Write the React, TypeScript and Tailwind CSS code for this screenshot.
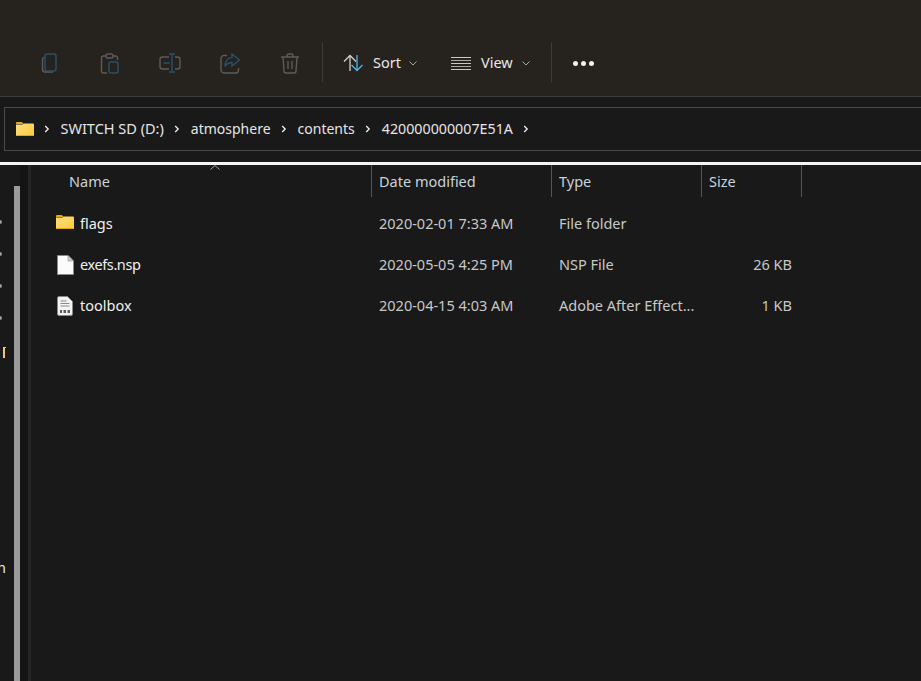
const FONT = "font-['Noto_Sans','Open_Sans',sans-serif]";

const Folder = ({ className }: { className: string }) => (
  <svg viewBox="0 0 18 14" className={className}>
    <path d="M0 1.2C0 .5.5 0 1.2 0h4.6l2 2H0z" fill="#e8a80c" />
    <path d="M0 2.6h6.4l1.6-1h8.8c.7 0 1.2.5 1.2 1.2V13c0 .6-.5 1-1 1H1c-.6 0-1-.4-1-1z" fill="url(#fold)" />
    <path d="M0 13h18v.2c0 .5-.4.8-1 .8H1c-.6 0-1-.3-1-.8z" fill="#e2a80f" />
    <defs>
      <linearGradient id="fold" x1="0" y1="0" x2="1" y2="1">
        <stop offset="0" stopColor="#ffdf7e" />
        <stop offset="1" stopColor="#fcc83e" />
      </linearGradient>
    </defs>
  </svg>
);

const DocIcon = () => (
  <svg viewBox="0 0 17 20" className="w-[17px] h-[20px]">
    <path d="M.5.5h10.500l5.500 5.500v13.500H.5z" fill="#fbfbfb" stroke="#8a8a8a" />
    <path d="M11 .5V6h5.500z" fill="#cfcfcf" stroke="#8a8a8a" strokeWidth=".6" />
  </svg>
);

const ConfigIcon = () => (
  <svg viewBox="0 0 16 20" className="w-[16px] h-[20px]">
    <path d="M2 .5h8.500l5 5V18a1.500 1.500 0 0 1-1.500 1.500H2A1.500 1.500 0 0 1 .5 18V2A1.500 1.500 0 0 1 2 .5z" fill="#f3f3f3" stroke="#8a8a8a" />
    <path d="M3.500 5h6M3.500 7.500h9M3.500 10h9" stroke="#8a8a8a" strokeWidth="1" />
    <path d="M3 14h2v3H3zM6.500 14h2.500v3H6.500zM10.500 14h2.500v3h-2.500z" fill="#5a5a5a" />
  </svg>
);

const ToolIcon = ({ children }: { children: React.ReactNode }) => (
  <svg viewBox="0 0 24 24" fill="none" strokeWidth="1.4" className="w-6 h-6 mx-[18px]">
    {children}
  </svg>
);

const GREY = "#5e5b58";
const BLUE = "#27516c";

const Chevron = () => (
  <svg viewBox="0 0 8 8" className="w-2 h-2 mx-[11px] shrink-0" fill="none" stroke="#f0f0f0" strokeWidth="1.3">
    <path d="M2.200 1l3 3-3 3" />
  </svg>
);

const SmallCaret = () => (
  <svg viewBox="0 0 8 5" className="w-2 h-[5px]" fill="none" stroke="#a9a7a5" strokeWidth="1">
    <path d="M.5.5L4 4 7.500.5" />
  </svg>
);

const rows = [
  { name: "flags", nameCls: "", date: "2020-02-01 7:33 AM", type: "File folder", size: "", icon: <Folder className="w-[18px] h-[14px] -mt-1" /> },
  { name: "exefs.nsp", nameCls: "tracking-[-0.4px]", date: "2020-05-05 4:25 PM", type: "NSP File", size: "26 KB", icon: <DocIcon /> },
  { name: "toolbox", nameCls: "", date: "2020-04-15 4:03 AM", type: "Adobe After Effect...", size: "1 KB", icon: <ConfigIcon /> },
];

const headers = [
  { label: "Name", cls: "w-[342px] pl-[40px]" },
  { label: "Date modified", cls: "w-[180px] pl-[7px] border-l border-[#555]" },
  { label: "Type", cls: "w-[150px] pl-[7px] border-l border-[#555]" },
  { label: "Size", cls: "w-[101px] pl-[7px] border-x border-[#555]" },
];

export default function App() {
  return (
    <div className={`${FONT} w-[921px] h-[681px] overflow-hidden bg-[#191919] text-[14.5px] text-[#e6e6e6] flex flex-col`}>
      {/* command bar */}
      <div className="h-[97px] shrink-0 bg-[#26221e] border-b border-[#3c3c3c] flex items-end pb-[14px] pl-[20px]">
        <div className="flex items-center h-[40px] pt-[2px]">
          <div className="flex items-center">
            <ToolIcon>
              <path d="M6 6.500c-1 .3-1.500 1-1.500 2v10c0 1.500 1 2.500 2.500 2.500h8" stroke={GREY} />
              <rect x="7" y="3" width="11" height="17" rx="2" stroke={BLUE} />
            </ToolIcon>
            <ToolIcon>
              <path d="M8 5H5.500C4.500 5 3.500 6 3.500 7v13c0 1 1 2 2 2H9M15 5h2.500c1 0 2 1 2 2v2" stroke={GREY} />
              <rect x="8" y="3" width="7" height="4" rx="1.500" stroke={GREY} />
              <rect x="11" y="11" width="9" height="11" rx="2" stroke={BLUE} />
            </ToolIcon>
            <ToolIcon>
              <path d="M11 6H4.500C3 6 2 7 2 8.500v7C2 17 3 18 4.500 18H11M17 6h2.500C21 6 22 7 22 8.500v7c0 1.500-1 2.500-2.500 2.500H17" stroke={GREY} />
              <path d="M11 3h6M14 3v18M11 21h6M5.500 12h6" stroke={BLUE} />
            </ToolIcon>
            <ToolIcon>
              <path d="M9 4.500H6C4.500 4.500 3 6 3 7.500V19c0 1.500 1.500 3 3 3h12c1.500 0 2.500-1.500 2.500-3v-2" stroke={GREY} />
              <path d="M14 3l7.500 6-7.500 6v-3.500c-3 0-5.500 1-7 4 0-5 2.500-9 7-9z" stroke={BLUE} />
            </ToolIcon>
            <ToolIcon>
              <path d="M3 6h18M9 6V4.500C9 3.500 10 3 11 3h2c1 0 2 .5 2 1.500V6M5 6l1 14c0 1 1 2 2 2h8c1 0 2-1 2-2l1-14M10 10v8M14 10v8" stroke={GREY} />
            </ToolIcon>
          </div>
          <div className="w-px h-[40px] -mt-[2px] bg-[#3c3a38] ml-[2px]" />
          <div className="flex items-center ml-[20px] text-[#e8e8e8]">
            <svg viewBox="0 0 22 18" className="w-[22px] h-[18px]" fill="none" strokeWidth="1.300">
              <path d="M7 17V1.500M1 7.500l6-6 6 6" stroke="#cfcfcf" />
              <path d="M14 1v15.500M8.500 11l5.500 5.500 5.500-5.500" stroke="#4db2e8" />
            </svg>
            <span className="ml-[8px]">Sort</span>
            <span className="ml-[8px]"><SmallCaret /></span>
          </div>
          <div className="flex items-center ml-[34px] text-[#e8e8e8]">
            <div className="w-[20px] flex flex-col gap-[2px]">
              <div className="h-px bg-[#c8c8c8]" />
              <div className="h-px bg-[#a8a8a8]" />
              <div className="h-px bg-[#c8c8c8]" />
              <div className="h-px bg-[#a8a8a8]" />
              <div className="h-px bg-[#c8c8c8]" />
            </div>
            <span className="ml-[10px]">View</span>
            <span className="ml-[9px]"><SmallCaret /></span>
          </div>
          <div className="w-px h-[40px] -mt-[2px] bg-[#3c3a38] ml-[21px]" />
          <div className="flex items-center gap-[3px] ml-[21px]">
            <div className="w-[5px] h-[5px] rounded-full bg-[#f0f0f0]" />
            <div className="w-[5px] h-[5px] rounded-full bg-[#f0f0f0]" />
            <div className="w-[5px] h-[5px] rounded-full bg-[#f0f0f0]" />
          </div>
        </div>
      </div>

      {/* address bar */}
      <div className="h-[65px] shrink-0 pt-[10px] pl-[4px]">
        <div className="h-[44px] border border-[#4a4a4a] border-r-0 flex items-center pl-[11px] pb-[1px]">
          <Folder className="w-[18px] h-[14px] -mr-[2px]" />
          <Chevron />
          <span className="-mx-[1.5px]">SWITCH SD (D:)</span>
          <Chevron />
          <span className="-mx-[1.5px] text-[14px]">atmosphere</span>
          <Chevron />
          <span className="-mx-[1.5px] text-[14px]">contents</span>
          <Chevron />
          <span className="-mx-[1.5px] text-[14.25px]">420000000007E51A</span>
          <Chevron />
        </div>
      </div>

      <div className="h-[3px] shrink-0 bg-[#f4f4f4]" />

      {/* body */}
      <div className="flex-1 flex min-h-0">
        {/* clipped navigation pane */}
        <div className="w-[14px] shrink-0 overflow-hidden">
          <div className="flex flex-col gap-[28px] pt-[55px] -ml-[2px]">
            <div className="w-1 h-1 rounded-full bg-[#9a9a9a]" />
            <div className="w-1 h-1 rounded-full bg-[#9a9a9a]" />
            <div className="w-1 h-1 rounded-full bg-[#9a9a9a]" />
            <div className="w-1 h-1 rounded-full bg-[#9a9a9a]" />
          </div>
          <div className="mt-[27px] ml-[3px] w-[3px] h-[11px] border-l-2 border-t border-[#f3c27a]" />
          <div className="mt-[199px] -ml-[3px] leading-[20px] text-[#dfefff]">n</div>
        </div>
        <div className="w-[6px] shrink-0 pt-[21px]">
          <div className="h-full bg-[#9a9a9a]" />
        </div>
        <div className="w-[8px] shrink-0 bg-[#141414]" />
        <div className="w-[3px] shrink-0 bg-[#262626]" />

        {/* file list */}
        <div className="flex-1 flex flex-col -ml-[2px] relative">
          <svg viewBox="0 0 10 5" className="absolute left-[181px] top-0 w-[10px] h-[5px]" fill="none" stroke="#9a9a9a">
            <path d="M.5 4.500L5 .5l4.500 4" />
          </svg>
          <div className="flex h-[32px] text-[#c9d3dc]">
            {headers.map((h) => (
              <div key={h.label} className={`${h.cls} pt-[6px]`}>
                {h.label}
              </div>
            ))}
          </div>
          <div className="flex flex-col mt-[6px]">
            {rows.map((r) => (
              <div key={r.name} className="flex items-center h-[41px]">
                <div className="w-[343px] flex items-center text-[#f0f0f0]">
                  <div className="w-[20px] ml-[26px] flex justify-center">{r.icon}</div>
                  <span className={`ml-[5px] ${r.nameCls}`}>{r.name}</span>
                </div>
                <div className="w-[180px] pl-[7px] text-[#c8c8c8]">{r.date}</div>
                <div className="w-[150px] pl-[7px] text-[#c8c8c8]">{r.type}</div>
                <div className="w-[99px] pr-[9px] text-right text-[#c8c8c8]">{r.size}</div>
              </div>
            ))}
          </div>
        </div>
      </div>
    </div>
  );
}
